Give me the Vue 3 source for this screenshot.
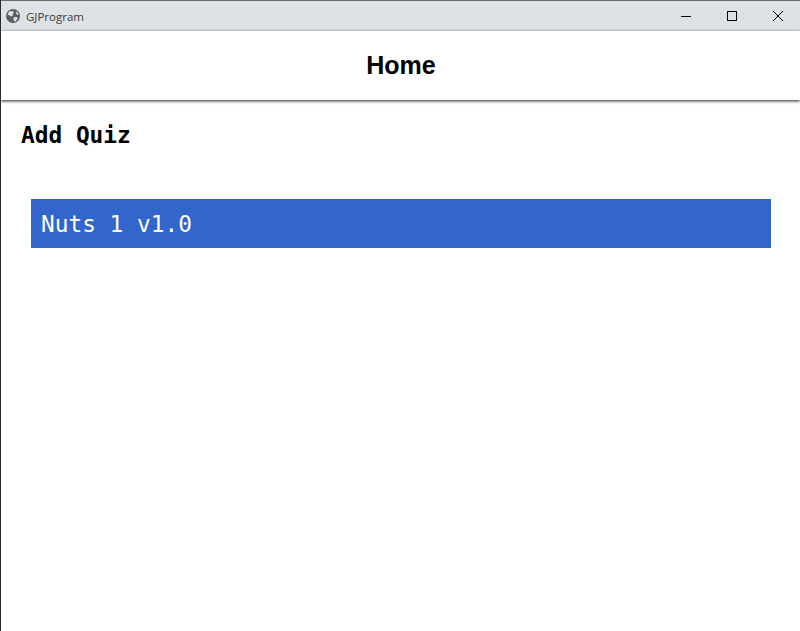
<script setup>
const quizzes = ['Nuts 1 v1.0']
</script>

<template>
  <div class="window">
    <div class="titlebar">
      <svg class="app-icon" width="14" height="14" viewBox="0 0 14 14">
        <circle cx="7" cy="7" r="7" fill="#5c5f63" />
        <path d="M3 2.5 L6.5 2 L8 3.5 L6.5 5 L7 6.5 L5 7.5 L3 6 L1.5 6 Z" fill="#dee1e6" />
        <path d="M8 8 L11 8 L11.5 9.5 L9.5 12.5 L8 12 L7.5 10 Z" fill="#dee1e6" />
        <path d="M10 2.5 L12 4 L12.5 6 L10.5 5.5 Z" fill="#dee1e6" />
      </svg>
      <span class="app-title">GJProgram</span>
      <div class="controls">
        <svg class="control" width="10" height="10" viewBox="0 0 10 10">
          <path d="M0 5.5 H10" stroke="#000" fill="none" />
        </svg>
        <svg class="control" width="10" height="10" viewBox="0 0 10 10">
          <rect x="0.5" y="0.5" width="9" height="9" stroke="#000" fill="none" />
        </svg>
        <svg class="control" width="10" height="10" viewBox="0 0 10 10">
          <path d="M0 0 L10 10 M10 0 L0 10" stroke="#000" stroke-width="1" fill="none" />
        </svg>
      </div>
    </div>
    <header class="header">
      <h1>Home</h1>
    </header>
    <main class="content">
      <div class="add-quiz">Add Quiz</div>
      <ul class="quiz-list">
        <li v-for="quiz in quizzes" :key="quiz" class="quiz">{{ quiz }}</li>
      </ul>
    </main>
  </div>
</template>

<style scoped>
.window {
  box-sizing: border-box;
  width: 800px;
  height: 631px;
  border-left: 1px solid #2b2b2b;
  background: #fff;
  overflow: hidden;
}

.titlebar {
  box-sizing: border-box;
  height: 31px;
  border-top: 1px solid #6a6c6e;
  background: #dee1e6;
  display: flex;
  align-items: center;
  padding-left: 5px;
}

.app-icon {
  margin-right: 6px;
}

.app-title {
  font-family: "Open Sans", "Liberation Sans", sans-serif;
  font-size: 11.5px;
  color: #3c3c3c;
}

.controls {
  margin-left: auto;
  margin-right: -1px;
  display: flex;
}

.control {
  width: 10px;
  height: 10px;
  padding: 10px 18px;
}

.header {
  height: 69px;
  display: flex;
  align-items: center;
  justify-content: center;
  padding-left: 1px;
  box-shadow: 0 1px 3px rgba(0, 0, 0, 0.9);
  position: relative;
}

.header h1 {
  margin: 0;
  font-family: "Liberation Sans", Arial, sans-serif;
  font-size: 25px;
  font-weight: bold;
  color: #000;
}

.content {
  padding: 20px 29px 0 20px;
}

.add-quiz {
  font-family: "DejaVu Sans Mono", monospace;
  font-size: 22.8px;
  font-weight: bold;
  line-height: 30px;
  color: #000;
}

.quiz-list {
  list-style: none;
  margin: 49px 0 0 10px;
  padding: 0;
}

.quiz {
  height: 49px;
  line-height: 50px;
  padding-left: 10px;
  background: #3366cc;
  color: #fff;
  font-family: "DejaVu Sans Mono", monospace;
  font-size: 22.8px;
}
</style>
